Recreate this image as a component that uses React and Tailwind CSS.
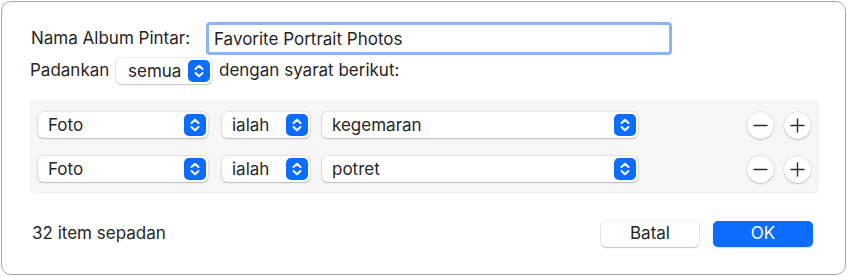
import React, { useState } from 'react';

const font = { fontFamily: 'Inter, "Noto Sans", sans-serif' };

// Blue up/down stepper shown at the right of every popup button
const Stepper = () => (
  <div className="w-[22px] h-[22px] rounded-[5px] bg-[#0b6cff] flex items-center justify-center shrink-0">
    <svg width="22" height="22" viewBox="0 0 22 22" fill="none">
      <path d="M7.5 9 L11 5.8 L14.5 9" stroke="white" strokeWidth="2" strokeLinecap="round" strokeLinejoin="round" />
      <path d="M7.5 13 L11 16.2 L14.5 13" stroke="white" strokeWidth="2" strokeLinecap="round" strokeLinejoin="round" />
    </svg>
  </div>
);

const Popup = ({ value, width, pl = 'pl-[10px]' }) => (
  <div
    className={`h-[26px] ${width} ${pl} pr-[2px] flex items-center justify-between bg-white rounded-[5px] shadow-[0_0_0_0.5px_rgba(0,0,0,0.14),0_1px_1.5px_rgba(0,0,0,0.18)] shrink-0`}
  >
    <span className="text-[17px] text-[#262626] leading-none">{value}</span>
    <Stepper />
  </div>
);

const RoundButton = ({ kind }) => (
  <button className="w-[27px] h-[27px] rounded-full bg-white shadow-[0_0_0_0.5px_rgba(0,0,0,0.12),0_1px_1.5px_rgba(0,0,0,0.18)] flex items-center justify-center">
    <svg width="27" height="27" viewBox="0 0 27 27" fill="none">
      <path d="M7 13.5 H20" stroke="#2b2b2b" strokeWidth="1.4" strokeLinecap="round" />
      {kind === 'plus' && <path d="M13.5 7 V20" stroke="#2b2b2b" strokeWidth="1.4" strokeLinecap="round" />}
    </svg>
  </button>
);

const CriteriaRow = ({ value }) => (
  <div className="flex items-center h-[26px]">
    <Popup value="Foto" width="w-[170px]" />
    <div className="ml-[14px]">
      <Popup value="ialah" width="w-[88px]" />
    </div>
    <div className="ml-[12px]">
      <Popup value={value} width="w-[316px]" />
    </div>
    <div className="ml-auto flex items-center gap-[10px]">
      <RoundButton kind="minus" />
      <RoundButton kind="plus" />
    </div>
  </div>
);

export default function App() {
  const [name, setName] = useState('Favorite Portrait Photos');

  return (
    <div className="w-[849px] h-[277px] bg-white p-[1px]" style={font}>
      <div className="h-[274px] w-[845px] rounded-[10px] border border-[#a8a8a8] bg-white pl-[28px] pr-[32px] pt-[20px] flex flex-col text-[#262626]">
        {/* album name */}
        <div className="flex items-center h-[33px]">
          <span className="w-[176px] pl-[1px] text-[17px]">Nama Album Pintar:</span>
          <input
            value={name}
            onChange={(e) => setName(e.target.value)}
            className="h-[33px] w-[466px] border-[3px] border-[#8db5f6] rounded-[4px] pl-[5px] text-[17px] text-[#1f1f1f] outline-none"
          />
        </div>

        {/* match row */}
        <div className="flex items-center h-[26px] mt-[3px]">
          <span className="text-[17px] w-[86px]">Padankan</span>
          <Popup value="semua" width="w-[96px]" pl="pl-[12px]" />
          <span className="text-[17px] ml-[7px]">dengan syarat berikut:</span>
        </div>

        {/* criteria */}
        <div className="mt-[16px] mr-[-6px] bg-[#f6f6f6] rounded-[5px] px-[8px] py-[12px] flex flex-col gap-[18px]">
          <CriteriaRow value="kegemaran" />
          <CriteriaRow value="potret" />
        </div>

        {/* footer */}
        <div className="mt-[27px] flex items-center h-[26px]">
          <span className="text-[17px] pl-[2px]">32 item sepadan</span>
          <div className="ml-auto flex items-center gap-[14px]">
            <button className="w-[98px] h-[26px] rounded-[5px] bg-white text-[17px] text-[#262626] shadow-[0_0_0_0.5px_rgba(0,0,0,0.14),0_1px_1.5px_rgba(0,0,0,0.18)]">
              Batal
            </button>
            <button className="w-[100px] h-[26px] rounded-[5px] bg-[#0b6cff] text-[17px] text-white shadow-[0_1px_1.5px_rgba(0,0,0,0.15)]">
              OK
            </button>
          </div>
        </div>
      </div>
    </div>
  );
}
